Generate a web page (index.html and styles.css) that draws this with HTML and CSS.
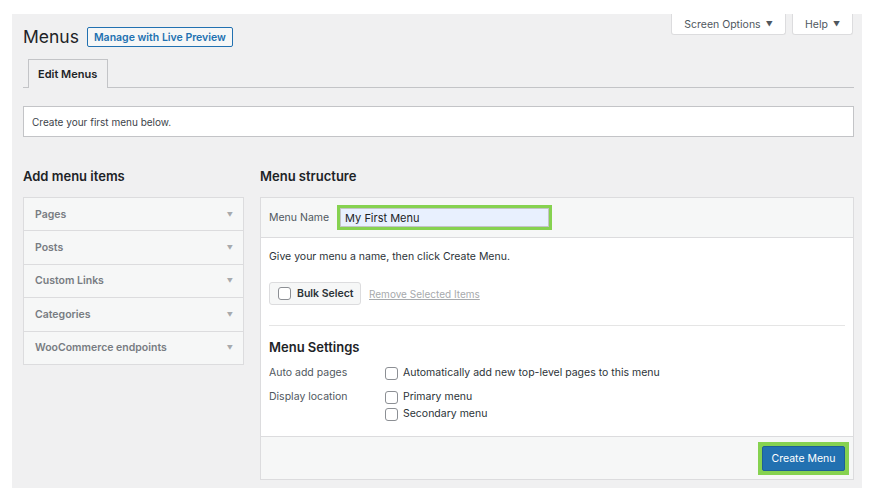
FILE: index.html
```html
<!DOCTYPE html>
<html lang="en">
<head>
<meta charset="utf-8">
<title>Menus</title>
<link rel="stylesheet" href="styles.css">
</head>
<body>
<div class="wrap">
  <div class="screen-meta">
    <button class="meta-btn meta-opts">Screen Options <span class="tri">▼</span></button>
    <button class="meta-btn meta-help">Help <span class="tri">▼</span></button>
  </div>
  <div class="title-row">
    <h1 class="page-title">Menus</h1>
    <button class="live-btn">Manage with Live Preview</button>
  </div>
  <div class="tabs">
    <div class="tab">Edit Menus</div>
  </div>
  <div class="notice">Create your first menu below.</div>
  <div class="columns">
    <div class="col-left">
      <h2 class="col-title">Add menu items</h2>
      <div class="accordion">
        <div class="acc-row"><span>Pages</span><span class="acc-tri">▼</span></div>
        <div class="acc-row"><span>Posts</span><span class="acc-tri">▼</span></div>
        <div class="acc-row"><span>Custom Links</span><span class="acc-tri">▼</span></div>
        <div class="acc-row"><span>Categories</span><span class="acc-tri">▼</span></div>
        <div class="acc-row"><span>WooCommerce endpoints</span><span class="acc-tri">▼</span></div>
      </div>
    </div>
    <div class="col-right">
      <h2 class="col-title">Menu structure</h2>
      <div class="panel">
        <div class="panel-head">
          <label class="name-label">Menu Name</label>
          <div class="ring ring-input"><div class="name-input">My First Menu</div></div>
        </div>
        <div class="panel-body">
          <p class="hint">Give your menu a name, then click Create Menu.</p>
          <div class="bulk-row">
            <div class="bulk-btn"><span class="cb"></span>Bulk Select</div>
            <span class="remove-link">Remove Selected Items</span>
          </div>
          <div class="sep"></div>
          <h3 class="settings-title">Menu Settings</h3>
          <div class="set-row">
            <div class="set-label">Auto add pages</div>
            <div class="set-opts">
              <div class="opt"><span class="cb"></span>Automatically add new top-level pages to this menu</div>
            </div>
          </div>
          <div class="set-row">
            <div class="set-label">Display location</div>
            <div class="set-opts">
              <div class="opt"><span class="cb"></span>Primary menu</div>
              <div class="opt"><span class="cb"></span>Secondary menu</div>
            </div>
          </div>
        </div>
        <div class="panel-foot">
          <div class="ring ring-btn"><button class="create-btn">Create Menu</button></div>
        </div>
      </div>
    </div>
  </div>
</div>
</body>
</html>
```
FILE: styles.css
```css
* { box-sizing: border-box; }
html, body { margin: 0; padding: 0; background: #ffffff; }
body {
  padding: 14px 9px 9px 12px;
  font-family: Inter, "Liberation Sans", sans-serif;
  color: #1d2327;
  font-size: 11px;
}
.wrap {
  width: 850px;
  height: 474px;
  background: #f0f0f1;
  padding: 0 8px 0 11px;
}
.screen-meta {
  float: right;
  display: flex;
  gap: 6px;
  margin-right: 1px;
}
.meta-btn {
  height: 21px;
  background: #fff;
  border: 1px solid #dcdcde;
  border-top: none;
  border-radius: 0 0 3px 3px;
  font-family: inherit;
  font-size: 10.5px;
  color: #50575e;
  padding: 0;
  display: flex;
  align-items: center;
  justify-content: center;
  gap: 5px;
  white-space: nowrap;
}
.meta-opts { width: 115px; }
.meta-help { width: 61px; }
.tri { font-size: 7px; color: #50575e; }
.title-row {
  display: flex;
  align-items: center;
  gap: 8px;
  padding-top: 13px;
  height: 33px;
}
.page-title {
  margin: 0;
  font-size: 17.5px;
  font-weight: 400;
  line-height: 20px;
  color: #1d2327;
}
.live-btn {
  height: 20px;
  border: 1px solid #2271b1;
  border-radius: 2px;
  background: #f6f7f7;
  color: #2271b1;
  font-family: inherit;
  font-size: 10.5px;
  font-weight: 600;
  padding: 0 6px;
}
.tabs {
  margin-top: 12px;
  padding-left: 5px;
  border-bottom: 1px solid #c3c4c7;
  height: 29px;
  display: flex;
}
.tab {
  height: 29px;
  border: 1px solid #c3c4c7;
  border-bottom: none;
  background: #f0f0f1;
  padding: 0 9px;
  display: flex;
  align-items: center;
  font-weight: 600;
  font-size: 11px;
  width: 80px;
  margin-bottom: -1px;
}
.notice {
  margin-top: 18px;
  height: 31px;
  background: #fff;
  border: 1px solid #c3c4c7;
  padding-left: 8px;
  display: flex;
  align-items: center;
  font-size: 10px;
  color: #3c434a;
}
.columns {
  display: flex;
  gap: 16px;
  margin-top: 29px;
}
.col-left { width: 221px; }
.col-right { width: 594px; }
.col-title {
  margin: 0 0 11px;
  height: 20px;
  line-height: 20px;
  font-size: 13px;
  font-weight: 600;
  color: #1d2327;
}
.accordion {
  border: 1px solid #dcdcde;
  background: #f6f7f7;
}
.acc-row {
  height: 33.4px;
  border-top: 1px solid #dcdcde;
  display: flex;
  align-items: center;
  justify-content: space-between;
  padding: 0 11px 0 11px;
  color: #787c82;
  font-weight: 600;
  font-size: 10.5px;
}
.acc-row:first-child { border-top: none; height: 32.4px; }
.acc-tri { font-size: 6px; color: #a7aaad; margin-right: -1px; }
.panel {
  border: 1px solid #dcdcde;
  background: #fff;
  height: 283px;
  display: flex;
  flex-direction: column;
}
.panel-head {
  height: 40px;
  background: #f6f7f7;
  border-bottom: 1px solid #dcdcde;
  display: flex;
  align-items: center;
  padding-left: 8px;
  gap: 8px;
}
.name-label { font-size: 10.5px; color: #50575e; }
.ring {
  background: #86d250;
  padding: 3px;
}
.ring-input { width: 215px; height: 25px; }
.name-input {
  height: 100%;
  background: #e8f0fe;
  border: 1px solid #c3c4c7;
  font-size: 11px;
  display: flex;
  align-items: center;
  padding-left: 4px;
  color: #1d2327;
}
.panel-body {
  flex: 1;
  padding: 0 8px;
}
.hint {
  margin: 12px 0 0;
  font-size: 10.5px;
  color: #2c3338;
  line-height: 14px;
}
.bulk-row {
  display: flex;
  align-items: center;
  gap: 8px;
  margin-top: 18px;
}
.bulk-btn {
  height: 23px;
  width: 92px;
  background: #f6f7f7;
  border: 1px solid #dcdcde;
  border-radius: 3px;
  display: flex;
  align-items: center;
  gap: 6px;
  padding-left: 8px;
  font-weight: 600;
  font-size: 10.5px;
  color: #2c3338;
}
.cb {
  width: 13px;
  height: 13px;
  border: 1px solid #8c8f94;
  border-radius: 3px;
  background: #fff;
  flex: none;
}
.remove-link {
  font-size: 10px;
  color: #a7aaad;
  text-decoration: underline;
}
.sep {
  margin-top: 20px;
  border-top: 1px solid #e5e5e5;
}
.settings-title {
  margin: 12px 0 0;
  font-size: 13px;
  font-weight: 600;
  line-height: 18px;
}
.set-row {
  display: flex;
  margin-top: 10px;
}
.set-label {
  width: 116px;
  font-size: 10.5px;
  color: #50575e;
  line-height: 14px;
  padding-top: 0;
}
.set-opts { display: flex; flex-direction: column; gap: 3px; }
.opt {
  display: flex;
  align-items: center;
  gap: 5px;
  font-size: 10.5px;
  color: #2c3338;
  line-height: 14px;
}
.set-row + .set-row { margin-top: 10px; }
.panel-foot {
  height: 43px;
  background: #f6f7f7;
  border-top: 1px solid #dcdcde;
  display: flex;
  align-items: center;
  justify-content: flex-end;
  padding-right: 4px;
}
.ring-btn { padding: 4px 4px 4px 4px; }
.create-btn {
  display: block;
  height: 25px;
  width: 83px;
  background: #2271b1;
  border: 1px solid #1e5f96;
  border-radius: 2px;
  color: #fff;
  font-family: inherit;
  font-size: 10.5px;
  padding: 0;
}
```
